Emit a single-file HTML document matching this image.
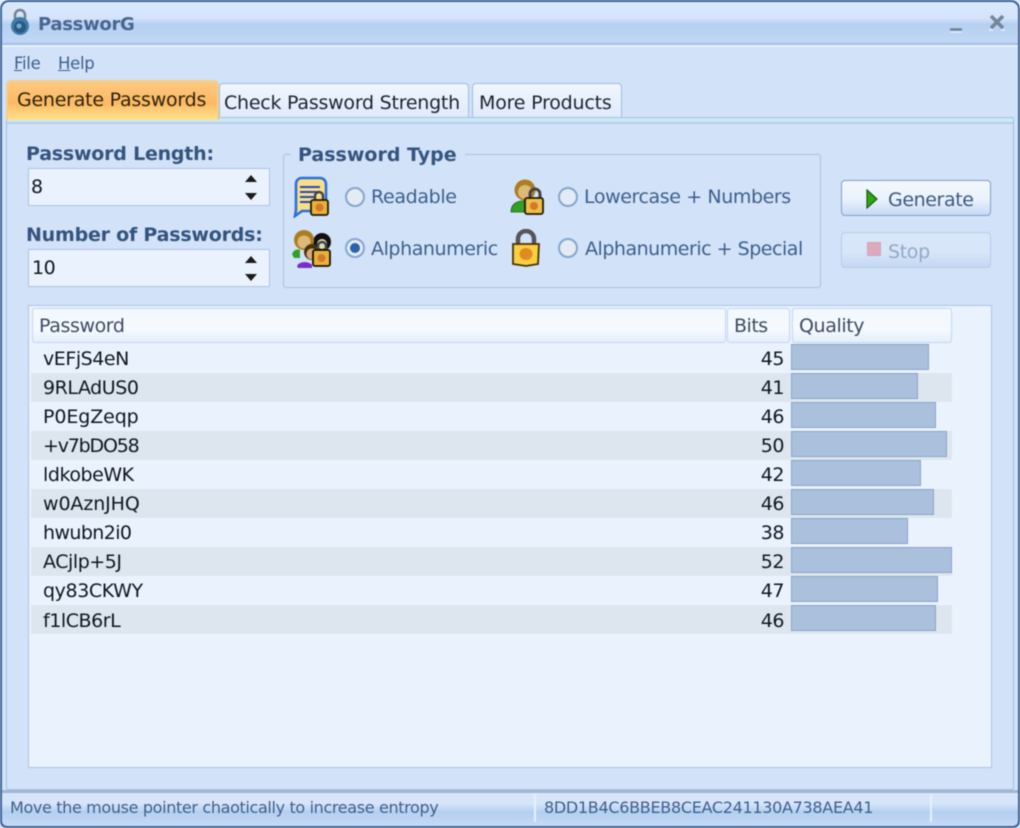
<!DOCTYPE html>
<html><head><meta charset="utf-8"><style>
html,body{margin:0;padding:0;background:#fff}
#w{position:relative;width:1020px;height:828px;overflow:hidden;background:#d2e2f8;font-family:"DejaVu Sans","Liberation Sans",sans-serif;filter:blur(.55px)}
#w div,#w span.t,#w svg{position:absolute}
.t{position:absolute;white-space:nowrap;line-height:24px;height:24px}
.b{font-weight:bold;color:#34547f;font-size:19px;letter-spacing:-.2px}
.l{color:#3d5f8c;font-size:19px;letter-spacing:-.35px}
.d{color:#10161f;font-size:19px;letter-spacing:-.45px}
.row{left:31px;width:921px;height:29px}
.bar{left:791px;height:26px;background:#aac0dc;border:1.5px solid #8aa4c6;box-sizing:border-box}
.n{left:720px;width:64px;text-align:right}
.hd{top:308px;height:35px;box-sizing:border-box;background:linear-gradient(#f3f8fe,#f6faff 60%,#e4eefb);border:1.5px solid #c2d6f1;border-radius:3px}
.radio{width:20px;height:20px;box-sizing:border-box;border-radius:50%;border:2px solid #86a6cf;background:#e3ebf4}
.spin{left:0;width:242px;height:38px;box-sizing:border-box;background:#eaf2fd;border:1.5px solid #adc5e4}
</style></head><body><div id="w">
<!-- window frame -->
<div style="left:0;top:0;width:1020px;height:828px;box-sizing:border-box;border:2px solid #3c6296;border-radius:9px 9px 7px 7px;z-index:20;pointer-events:none"></div>
<div style="left:0;top:0;width:1020px;height:45px;background:linear-gradient(#dbe9fc 0,#d4e4fb 40%,#b6d0f2 54%,#c2d8f5 100%)"></div>
<div style="left:0;top:43px;width:1020px;height:2px;background:#a3c0e6"></div>
<div style="left:0;top:45px;width:1020px;height:2px;background:#e6f0fd"></div>
<svg style="left:10px;top:8px" width="20" height="28" viewBox="0 0 20 28"><path d="M5 13V7a5 5 0 0 1 10 0v6" fill="none" stroke="#7a8088" stroke-width="2.500"/><circle cx="10" cy="18" r="9" fill="#3f7ea8"/><circle cx="10" cy="19" r="6" fill="#2b5a80"/><circle cx="9" cy="18" r="2.500" fill="#6fb0d4"/></svg>
<span class="t" style="left:38px;top:13px;font-size:18px;font-weight:bold;color:#4a668f;letter-spacing:-.3px">PassworG</span>
<svg style="left:948px;top:12px" width="60" height="22" viewBox="0 0 60 22"><path d="M2 17.500h12" stroke="#6f7f96" stroke-width="2.500"/><path d="M2 20h12" stroke="#eef5ff" stroke-width="1"/><path d="M43 4l12 12M55 4L43 16" stroke="#75859c" stroke-width="3.500"/><path d="M41 18h4M53 18h4" stroke="#eef5ff" stroke-width="1.200"/></svg>
<!-- menu -->
<span class="t" style="left:14px;top:52px;font-size:16.500px;color:#3d5f8c;letter-spacing:-.3px"><u>F</u>ile</span>
<span class="t" style="left:58px;top:52px;font-size:16.500px;color:#3d5f8c;letter-spacing:-.3px"><u>H</u>elp</span>
<!-- tabs -->
<div style="left:219px;top:83px;width:250px;height:36px;box-sizing:border-box;border:1.500px solid #9dbce3;border-bottom:0;border-radius:4px 4px 0 0;background:linear-gradient(#f0f6fe,#dfeafa)"></div>
<div style="left:472px;top:83px;width:150px;height:36px;box-sizing:border-box;border:1.500px solid #9dbce3;border-bottom:0;border-radius:4px 4px 0 0;background:linear-gradient(#f0f6fe,#dfeafa)"></div>
<div style="left:6px;top:80px;width:213px;height:40px;box-sizing:border-box;border:2px solid #f2cf8e;border-bottom:0;border-radius:5px 5px 0 0;background:linear-gradient(#fdc981,#fdb962 55%,#ffe38e);z-index:3"></div>
<span class="t" style="left:17px;top:88px;font-size:19px;color:#2a2410;letter-spacing:-.24px;z-index:4">Generate Passwords</span>
<span class="t" style="left:224px;top:91px;font-size:19px;color:#1c2430;letter-spacing:-.24px">Check Password Strength</span>
<span class="t" style="left:479px;top:91px;font-size:19px;color:#1c2430;letter-spacing:-.2px">More Products</span>
<!-- content panel -->
<div style="left:6px;top:117px;width:1008px;height:673px;box-sizing:border-box;border:1.500px solid #a6c1e4;background:#d2e2f8;border-radius:2px"></div>
<div style="left:7px;top:119px;width:1006px;height:3px;background:#c9eaf2"></div>
<div style="left:7px;top:122px;width:1006px;height:2px;background:#a5c2e6;opacity:.6"></div>
<!-- left controls -->
<span class="t b" style="left:26px;top:142px;letter-spacing:-.22px">Password Length:</span>
<div class="spin" style="left:28px;top:168px"></div>
<span class="t d" style="left:31px;top:175px">8</span>
<svg style="left:244px;top:174px" width="14" height="27" viewBox="0 0 14 27"><path d="M1 8L7 1l6 7zM1 19h12l-6 7z" fill="#1a1a1a"/></svg>
<span class="t b" style="left:26px;top:223px;letter-spacing:-.22px">Number of Passwords:</span>
<div class="spin" style="left:28px;top:249px"></div>
<span class="t d" style="left:32px;top:256px">10</span>
<svg style="left:244px;top:255px" width="14" height="27" viewBox="0 0 14 27"><path d="M1 8L7 1l6 7zM1 19h12l-6 7z" fill="#1a1a1a"/></svg>
<!-- group -->
<div style="left:283px;top:154px;width:538px;height:134px;box-sizing:border-box;border:1.500px solid #a9c2e2;border-radius:3px"></div>
<div style="left:291px;top:145px;width:174px;height:20px;background:#d2e2f8"></div>
<span class="t b" style="left:298px;top:143px;letter-spacing:0">Password Type</span>
<!-- icons -->
<svg style="left:292px;top:176px" width="40" height="42" viewBox="0 0 40 42"><path d="M9 2h19a6 6 0 0 1 6 6v21a6 6 0 0 1-6 6H10l-7 5 1-6V8a6 6 0 0 1 5-6z" fill="#f8df86" stroke="#2a70e0" stroke-width="2.600"/><path d="M8 11h20M8 16h20M8 21h14M8 26h12" stroke="#2448c0" stroke-width="2"/><path d="M23 24v-4a4 4 0 0 1 8 0v4" fill="none" stroke="#444" stroke-width="2.500"/><rect x="19" y="24" width="17" height="15" rx="2" fill="#e8b23a" stroke="#221a08" stroke-width="1.800"/><circle cx="27.500" cy="31.500" r="4" fill="#d8772a"/></svg>
<svg style="left:510px;top:178px" width="34" height="38" viewBox="0 0 34 38"><path d="M1 34c0-8 6-11 12-11s8 3 8 11z" fill="#32a024" stroke="#1c5a16" stroke-width=".8"/><circle cx="15" cy="12" r="10.500" fill="#ac7e22"/><circle cx="15" cy="14" r="7" fill="#dfb878"/><path d="M20 20v-4a5 5 0 0 1 10 0v4" fill="none" stroke="#444" stroke-width="3"/><rect x="15" y="20" width="18" height="16" rx="2" fill="#eebf45" stroke="#221a08" stroke-width="1.800"/><circle cx="24" cy="28" r="4" fill="#d8772a"/></svg>
<svg style="left:292px;top:228px" width="40" height="42" viewBox="0 0 40 42"><circle cx="30" cy="14" r="9" fill="#111"/><circle cx="30" cy="16" r="5" fill="#ddb"/><path d="M5 38c2-5 12-5 15-1v3H6z" fill="#7d2cc8"/><path d="M0 26c2-5 6-5 8-4v8H2z" fill="#32a024"/><circle cx="12" cy="12" r="10" fill="#ac7e22"/><circle cx="12" cy="14" r="6.500" fill="#dfb878"/><circle cx="20" cy="24" r="8" fill="#4a3010"/><circle cx="20" cy="26" r="5.500" fill="#d9ad72"/><path d="M26 22v-4a4 4 0 0 1 8 0v4" fill="none" stroke="#444" stroke-width="2.500"/><rect x="21" y="22" width="17" height="16" rx="2" fill="#e8b23a" stroke="#181208" stroke-width="1.800"/><circle cx="29.500" cy="30" r="4" fill="#d8772a"/></svg>
<svg style="left:511px;top:229px" width="30" height="38" viewBox="0 0 30 38"><path d="M7 16V10a8 8 0 0 1 16 0v6" fill="none" stroke="#55555a" stroke-width="4.500"/><path d="M2 15h26l-1 20-12 2-13-2z" fill="#f8cf3e" stroke="#4a3208" stroke-width="1.800"/><ellipse cx="15" cy="25" rx="6.500" ry="6" fill="#e08a24"/></svg>
<!-- radios -->
<div class="radio" style="left:345px;top:187px"></div>
<div class="radio" style="left:345px;top:238px"></div>
<div style="left:350px;top:243px;width:10px;height:10px;border-radius:50%;background:#2a62ac"></div>
<div class="radio" style="left:558px;top:187px"></div>
<div class="radio" style="left:558px;top:238px"></div>
<span class="t l" style="left:371px;top:185px">Readable</span>
<span class="t l" style="left:371px;top:237px;letter-spacing:-.42px">Alphanumeric</span>
<span class="t l" style="left:584px;top:185px;letter-spacing:-.4px">Lowercase + Numbers</span>
<span class="t l" style="left:585px;top:237px;letter-spacing:-.48px">Alphanumeric + Special</span>
<!-- buttons -->
<div style="left:841px;top:180px;width:150px;height:36px;box-sizing:border-box;border:1.800px solid #7f9fc9;border-radius:4px;background:linear-gradient(#f3f8fe,#eaf2fd 55%,#c6d9f4)"></div>
<svg style="left:865px;top:189px" width="14" height="20" viewBox="0 0 14 20"><path d="M2 1l10 9-10 9z" fill="#2fa80f" stroke="#1c5a16" stroke-width="1.200"/></svg>
<span class="t l" style="left:888px;top:188px;color:#3d5880;letter-spacing:-.4px">Generate</span>
<div style="left:841px;top:232px;width:150px;height:36px;box-sizing:border-box;border:1.800px solid #b6cce9;border-radius:4px;background:linear-gradient(#d8e6f9,#d8e6f9 55%,#c4d8f3)"></div>
<div style="left:867px;top:242px;width:14px;height:14px;background:#dcaab8;border:1px solid #c8a8bc;box-sizing:border-box"></div>
<span class="t l" style="left:888px;top:240px;color:#93a8c6">Stop</span>
<!-- list -->
<div style="left:28px;top:305px;width:964px;height:463px;box-sizing:border-box;border:1.500px solid #aec6e6;background:#eaf2fd"></div>
<div class="hd" style="left:32px;width:694px"></div>
<div class="hd" style="left:727px;width:63px"></div>
<div class="hd" style="left:792px;width:160px"></div>
<span class="t" style="left:39px;top:314px;font-size:19px;color:#3c4a62;letter-spacing:-.4px">Password</span>
<span class="t" style="left:734px;top:314px;font-size:19px;color:#3c4a62;letter-spacing:-.5px">Bits</span>
<span class="t" style="left:799px;top:314px;font-size:19px;color:#3c4a62;letter-spacing:-.4px">Quality</span>
<div class="row" style="top:373px;background:#dde5ee"></div>
<div class="row" style="top:431px;background:#dde5ee"></div>
<div class="row" style="top:489px;background:#dde5ee"></div>
<div class="row" style="top:547px;background:#dde5ee"></div>
<div class="row" style="top:605px;background:#dde5ee"></div>
<div class="bar" style="top:344px;width:138px"></div>
<div class="bar" style="top:373px;width:127px"></div>
<div class="bar" style="top:402px;width:145px"></div>
<div class="bar" style="top:431px;width:156px"></div>
<div class="bar" style="top:460px;width:130px"></div>
<div class="bar" style="top:489px;width:143px"></div>
<div class="bar" style="top:518px;width:117px"></div>
<div class="bar" style="top:547px;width:161px"></div>
<div class="bar" style="top:576px;width:147px"></div>
<div class="bar" style="top:605px;width:145px"></div>
<span class="t d" style="left:43px;top:347px">vEFjS4eN</span><span class="t d n" style="top:347px">45</span>
<span class="t d" style="left:43px;top:376px">9RLAdUS0</span><span class="t d n" style="top:376px">41</span>
<span class="t d" style="left:43px;top:405px;letter-spacing:-.1px">P0EgZeqp</span><span class="t d n" style="top:405px">46</span>
<span class="t d" style="left:43px;top:434px;letter-spacing:-1.200px">+v7bDO58</span><span class="t d n" style="top:434px">50</span>
<span class="t d" style="left:43px;top:463px">ldkobeWK</span><span class="t d n" style="top:463px">42</span>
<span class="t d" style="left:43px;top:492px;letter-spacing:-.1px">w0AznJHQ</span><span class="t d n" style="top:492px">46</span>
<span class="t d" style="left:43px;top:521px;letter-spacing:-.6px">hwubn2i0</span><span class="t d n" style="top:521px">38</span>
<span class="t d" style="left:43px;top:550px">ACjlp+5J</span><span class="t d n" style="top:550px">52</span>
<span class="t d" style="left:43px;top:579px;letter-spacing:-.4px">qy83CKWY</span><span class="t d n" style="top:579px">47</span>
<span class="t d" style="left:43px;top:609px">f1lCB6rL</span><span class="t d n" style="top:609px">46</span>
<!-- status bar -->
<div style="left:0;top:790px;width:1020px;height:3px;background:#a2b6d2"></div>
<div style="left:0;top:793px;width:1020px;height:35px;background:linear-gradient(#d6e5fa 0,#d6e5fa 30%,#b4cff1 55%,#c9dcf6 100%)"></div>
<div style="left:534px;top:794px;width:2px;height:28px;background:#e6f0fd"></div>
<div style="left:930px;top:794px;width:2px;height:28px;background:#e6f0fd"></div>
<span class="t" style="left:10px;top:796px;font-size:16px;color:#3d5f8c;letter-spacing:-.35px">Move the mouse pointer chaotically to increase entropy</span>
<span class="t" style="left:544px;top:796px;font-size:16px;color:#3d5f8c;letter-spacing:-.3px">8DD1B4C6BBEB8CEAC241130A738AEA41</span>
</div></body></html>
